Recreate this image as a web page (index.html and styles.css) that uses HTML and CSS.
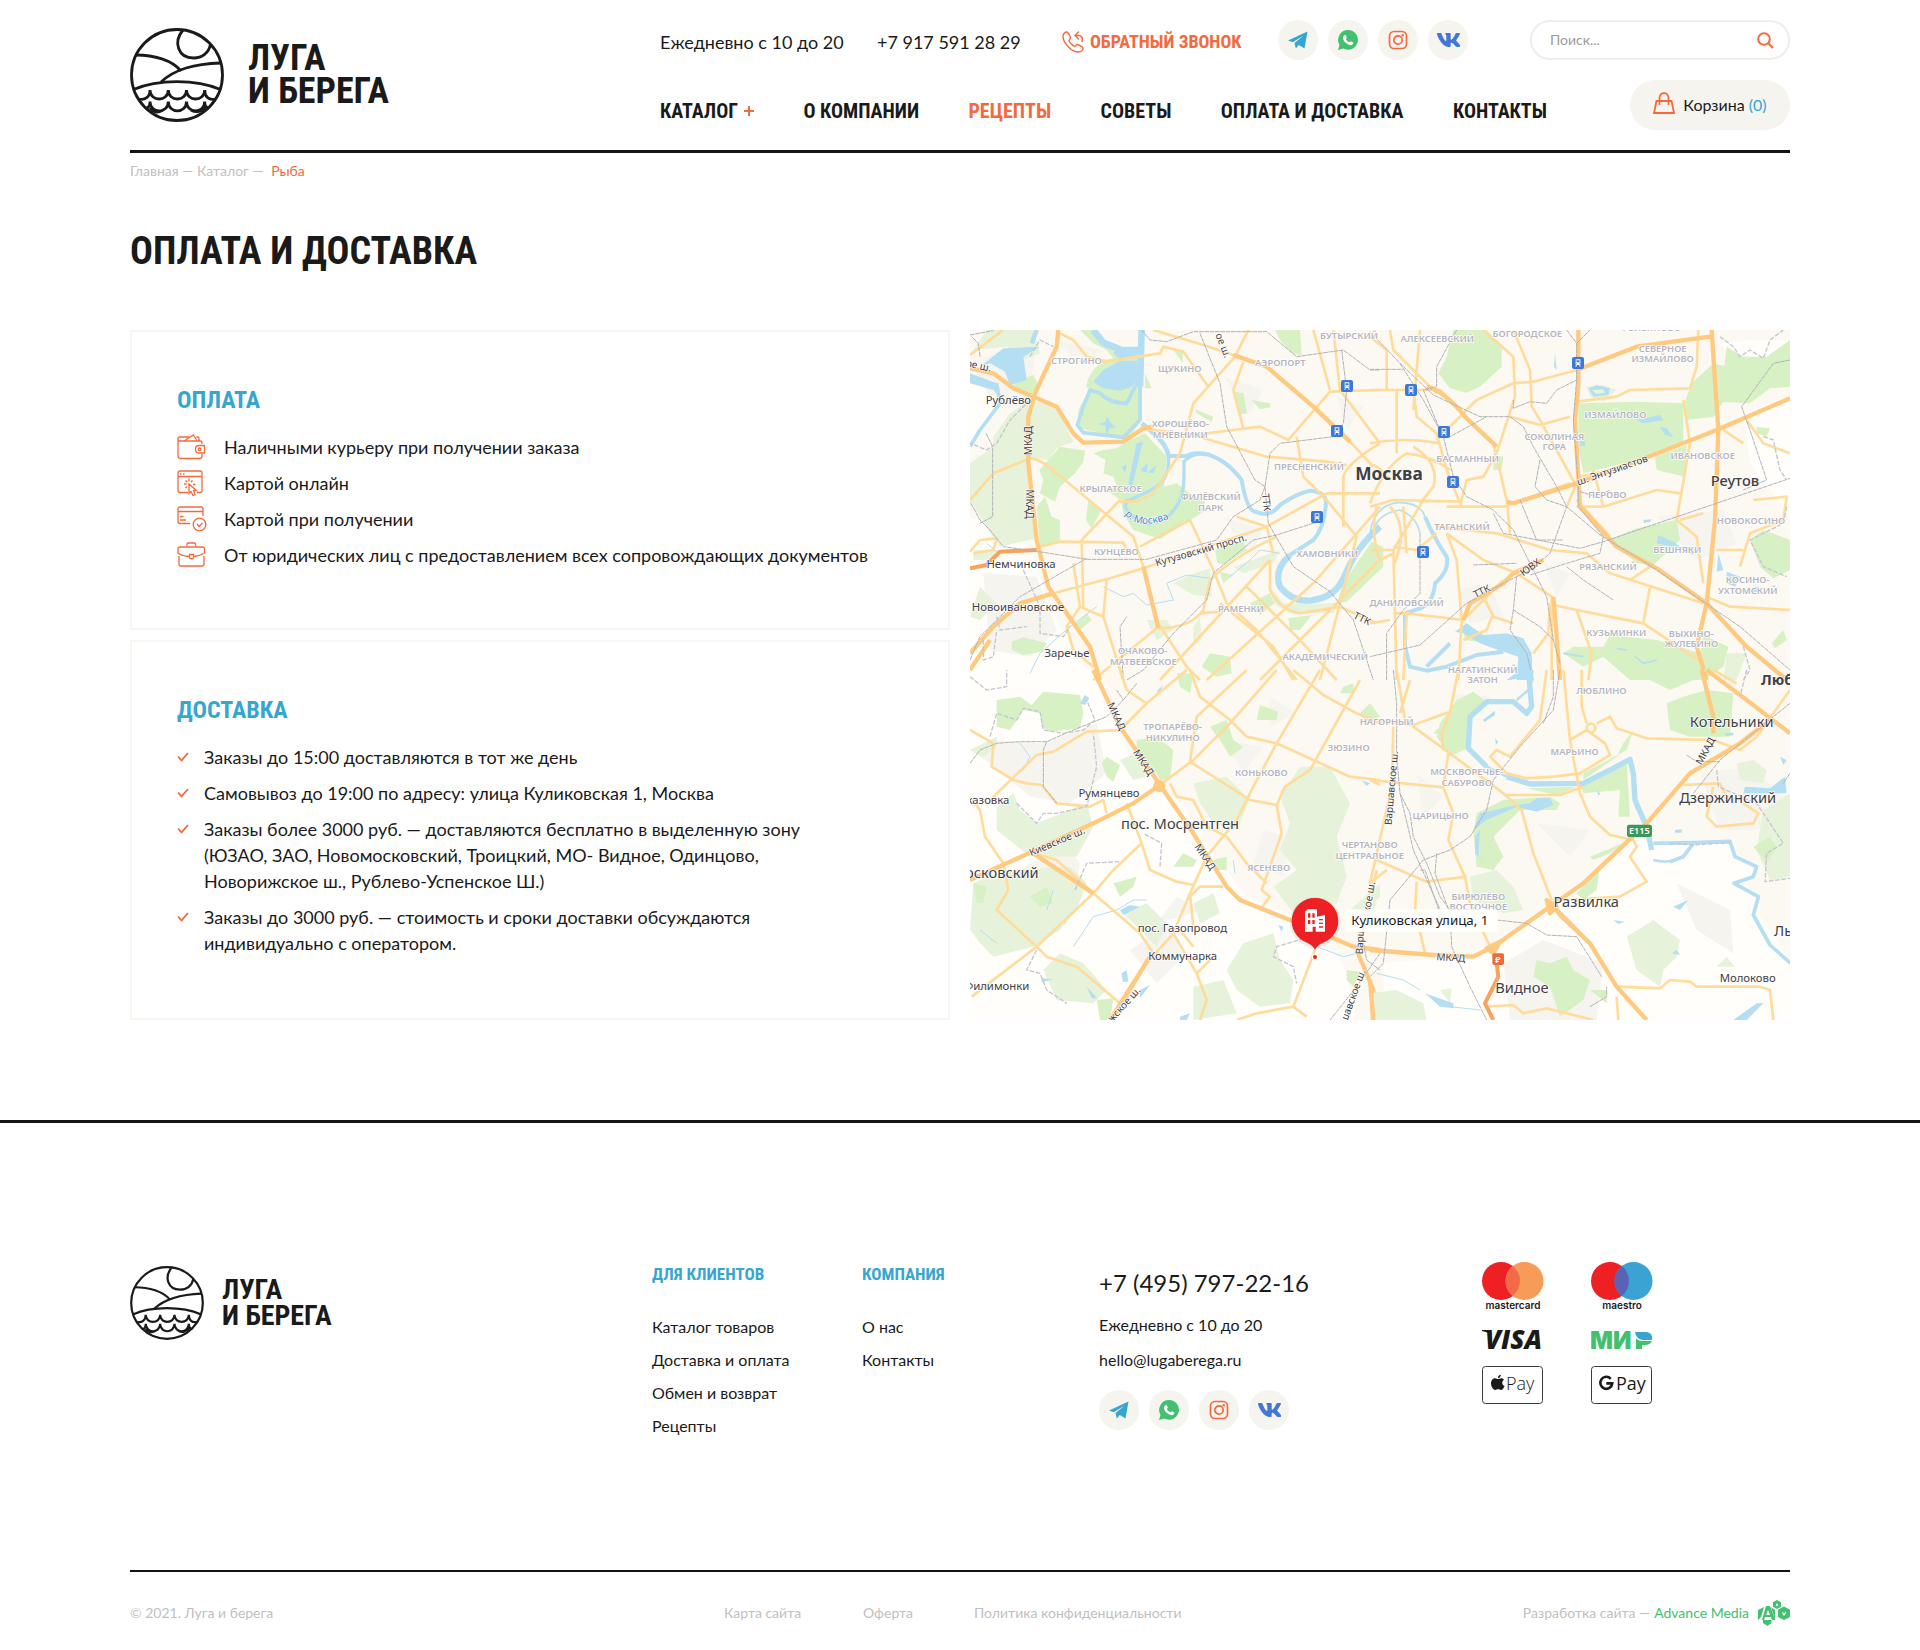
FILE: index.html
```html
<!DOCTYPE html>
<html lang="ru">
<head>
<meta charset="utf-8">
<meta name="viewport" content="width=device-width, initial-scale=1">
<title>Оплата и доставка — Луга и Берега</title>
<link rel="stylesheet" href="styles.css">
</head>
<body>
<svg class="sprite" aria-hidden="true">
  <symbol id="mark" viewBox="0 0 94 94">
    <g fill="none" stroke="currentColor" stroke-width="2.8">
      <circle cx="47" cy="47" r="45.5"/>
      <path d="M53 2C43 14 48 30 63.500 30C72 30 79 25 80.500 16"/>
      <path d="M6 27C24 27 42 32 51 43"/>
      <path d="M91 35C64 36 45 41 31 54"/>
      <path d="M3.500 61.500C28 51 66 51 90.500 61.500"/>
      <path d="M9 71C15 72.500 20 69 20 62C20 74 38.300 74 38.300 62C38.300 74 56.500 74 56.500 62C56.500 74 74.700 74 74.700 62C74.700 69 79 72.500 85 71"/>
      <path d="M16 80C19 80 20 78 20 73.500C20 86 38.300 86 38.300 73.500C38.300 86 56.500 86 56.500 73.500C56.500 86 74.700 86 74.700 73.500C74.700 78 76 80 79 80M20 80C24 86 30 84 33 82M61 82C66 85 72 84 75 79"/>
    </g>
  </symbol>
  <symbol id="telegram" viewBox="0 0 20 20"><path fill="#36a6cf" d="M0 10.500L19.500 1.500L16.500 18.500L10.800 15L7.800 18.500L6.500 13L15.500 5.500L4.800 12.300Z"/></symbol>
  <symbol id="whatsapp" viewBox="0 0 20 20"><path fill="#42bf6f" d="M10.100 0A9.900 9.900 0 1 1 5.300 18.600L0 20L1.500 14.900A9.900 9.900 0 0 1 10.100 0Z"/><path fill="#fff" d="M6.700 5C7.200 4.900 7.700 4.900 7.900 5.400L8.700 7.300C8.900 7.900 8 8.500 7.900 8.900C8.600 10.500 9.900 11.700 11.500 12.300C12 12.300 12.500 11.200 13 11.300L15 12.300C15.500 12.600 15.300 13.800 14.800 14.300C13.500 15.500 11.800 15.300 9.800 14.300C7.600 13.200 5.900 11.200 5.200 9.200C4.700 7.300 5.300 5.600 6.700 5Z"/></symbol>
  <symbol id="instagram" viewBox="0 0 20 20"><g fill="none" stroke="#f26a3d" stroke-width="1.700"><rect x="1.500" y="1.500" width="17" height="17" rx="4.500"/><circle cx="10" cy="10" r="4.200"/></g><circle cx="14.700" cy="5.300" r="1.200" fill="#f26a3d"/></symbol>
  <symbol id="vk" viewBox="18 96 530 320"><path fill="#4377d5" d="M545 117.700c3.700-12.500 0-21.700-17.800-21.700h-58.900c-15 0-21.900 7.900-25.600 16.700 0 0-30 73.100-72.400 120.500-13.700 13.700-20 18.100-27.500 18.100-3.700 0-9.400-4.400-9.400-16.900V117.700c0-15-4.200-21.700-16.600-21.700h-92.600c-9.400 0-15 7-15 13.500 0 14.200 21.200 17.500 23.400 57.500v86.800c0 19-3.400 22.500-10.900 22.500-20 0-68.600-73.400-97.400-157.400-5.800-16.300-11.500-22.900-26.600-22.900H38.800c-16.800 0-20.200 7.900-20.200 16.700 0 15.600 20 93.100 93.100 195.500C160.400 378.100 229 416 291.400 416c37.500 0 42.100-8.400 42.100-22.900 0-66.800-3.400-73.100 15.400-73.100 8.700 0 23.700 4.400 58.700 38.100 40 40 46.600 57.900 69 57.900h58.900c16.800 0 25.300-8.400 20.400-25-11.200-34.900-86.900-106.700-90.300-111.500-8.700-11.200-6.200-16.200 0-26.200.1-.1 72-101.300 79.400-135.600z"/></symbol>
  <symbol id="check" viewBox="0 0 12 10"><path fill="none" stroke="#f26a3d" stroke-width="1.800" d="M1 4.500L4.500 8.300L11 1"/></symbol>
  <symbol id="train" viewBox="0 0 36 36"><rect width="36" height="36" rx="6" fill="#3b78d8"/><path fill="#fff" fill-rule="evenodd" d="M11 7H25V24H11ZM13.500 10V16H22.500V10ZM13 19V21.500H15.500V19ZM20.500 19V21.500H23V19ZM12 25H15L13 29H9.500ZM21 25H24L26.500 29H23Z"/></symbol>
</svg>

<header class="wrap">
  <div class="header">
    <a class="logo" href="#">
      <svg class="logo-mark" aria-hidden="true"><use href="#mark"/></svg>
      <span>ЛУГА<br>И БЕРЕГА</span>
    </a>
    <div class="header-main">
      <div class="header-top">
        <span class="info">Ежедневно с 10 до 20</span>
        <a class="info" href="tel:+79175912829">+7 917 591 28 29</a>
        <button class="callback info" type="button">
          <svg viewBox="0 0 22 22" width="22" height="22" aria-hidden="true"><g fill="none" stroke="currentColor" stroke-width="1.400" stroke-linecap="round"><path d="M8.500 6.500C7.500 4 6 1 4.500 1C2.500 1 1 3.500 1 5.500C1 9 4.500 14 7 16.500C9 18.500 13 21 16.500 21C19 21 21 19.500 21 17.500C21 16 18 14.500 15.500 13.500C14.500 13 14 15 13 15.300C11.500 15.700 7.300 11.500 7 9.700C7 8.500 8.800 8 8.500 6.500Z"/><path d="M16.500 1L13 4.500L16.500 8M13.500 4.500H16.500C20 4.500 21 7 20 10.500"/></g></svg>
          ОБРАТНЫЙ ЗВОНОК
        </button>
        <div class="socials">
          <a href="#" aria-label="Telegram"><svg width="20" height="20"><use href="#telegram"/></svg></a>
          <a href="#" aria-label="WhatsApp"><svg width="20" height="20"><use href="#whatsapp"/></svg></a>
          <a href="#" aria-label="Instagram"><svg width="20" height="20"><use href="#instagram"/></svg></a>
          <a href="#" aria-label="ВКонтакте"><svg width="23" height="14"><use href="#vk"/></svg></a>
        </div>
        <form class="search">
          <input type="search" placeholder="Поиск..." aria-label="Поиск">
          <button type="submit" aria-label="Найти"><svg viewBox="0 0 17 17" width="17" height="17"><g fill="none" stroke="#f26a3d" stroke-width="2"><circle cx="7" cy="7" r="5.800"/><path d="M11 11L16 16"/></g></svg></button>
        </form>
      </div>
      <div class="header-bottom">
        <nav class="nav" aria-label="Основное меню">
          <a href="#">КАТАЛОГ<svg class="plus" viewBox="0 0 10 10" width="10" height="10" aria-hidden="true"><path d="M5 0V10M0 5H10" stroke="#f26a3d" stroke-width="2"/></svg></a>
          <a href="#">О КОМПАНИИ</a>
          <a class="active" href="#">РЕЦЕПТЫ</a>
          <a href="#">СОВЕТЫ</a>
          <a href="#">ОПЛАТА И ДОСТАВКА</a>
          <a href="#">КОНТАКТЫ</a>
        </nav>
        <a class="cart" href="#">
          <svg viewBox="0 0 22 22" width="22" height="22" aria-hidden="true"><g fill="none" stroke="#f26a3d" stroke-width="1.800"><path d="M3.500 9H18.500L21 21H1Z"/><path d="M6.500 13V6C6.500-.5 15.500-.5 15.500 6V13"/></g></svg>
          <span>Корзина <b>(0)</b></span>
        </a>
      </div>
    </div>
  </div>
</header>

<main class="wrap">
  <nav class="crumbs" aria-label="Хлебные крошки"><a href="#">Главная</a> — <a href="#">Каталог</a> — <span>Рыба</span></nav>
  <h1>ОПЛАТА И ДОСТАВКА</h1>
  <div class="content">
    <div class="cards">
      <section class="card">
        <h2>ОПЛАТА</h2>
        <ul class="pay-list">
          <li><svg viewBox="0 0 30 26" width="30" height="26" aria-hidden="true"><g fill="none" stroke="#f26a3d" stroke-width="1.300"><path d="M25 10V8.500Q25 7 23.500 7H3Q1 7 1 5Q1 3 3 3H12M1 5V22Q1 24.500 3.500 24.500H22.500Q25 24.500 25 22V20M22 7V4Q22 3 20.500 3H19.500"/><path d="M7 7L16.500 1L20 7"/><path d="M27.500 11.500H22Q18.500 11.500 18.500 15Q18.500 19 22 19H27.500Z"/><circle cx="22.500" cy="15.300" r="1.300"/></g></svg>Наличными курьеру при получении заказа</li>
          <li><svg viewBox="0 0 30 26" width="30" height="26" aria-hidden="true"><g fill="none" stroke="#f26a3d" stroke-width="1.300"><path d="M11 22.500H3Q1 22.500 1 20.500V3Q1 1 3 1H23Q25 1 25 3V20.500Q25 22.500 23 22.500H20M1 6.500H25"/><path d="M12 14V23.500L14 21.500L16 25.500L18 24.500L16.500 20.500H19.500Z"/><path d="M12 8.500V11.500M7 14H9.500M8.500 10.500L10.300 12.200M15.500 10.500L14 12.200M16 14.500H18.500M8.500 18L10 16.500"/><path stroke-dasharray="1.500 1.500" d="M3 4H9"/></g></svg>Картой онлайн</li>
          <li><svg viewBox="0 0 30 26" width="30" height="26" aria-hidden="true"><g fill="none" stroke="#f26a3d" stroke-width="1.300"><path d="M26 10V3Q26 1 24 1H3Q1 1 1 3V15.500Q1 17.500 3 17.500H13M1 5.500H26M3 10.500H6.500M3 14H9"/><circle cx="22.500" cy="18.500" r="6.300"/><path d="M20 18L22 20.500L25.500 17"/></g></svg>Картой при получении</li>
          <li><svg viewBox="0 0 30 26" width="30" height="26" aria-hidden="true"><g fill="none" stroke="#f26a3d" stroke-width="1.300"><path d="M10 4V2Q10 1 11 1H17.500Q18.500 1 18.500 2V4"/><path d="M12.500 14.500Q5 14 1 11V7Q1 5 3 5H25.500Q27.500 5 27.500 7V11Q23 14 16.500 14.500M2 14V22Q2 24 4 24H25Q27 24 27 22V14"/><path d="M12.500 12.500H16.500V16Q14.500 17.500 12.500 16Z"/></g></svg>От юридических лиц с предоставлением всех сопровождающих документов</li>
        </ul>
      </section>
      <section class="card">
        <h2>ДОСТАВКА</h2>
        <ul class="ship-list">
          <li><svg width="12" height="10" aria-hidden="true"><use href="#check"/></svg><span>Заказы до 15:00 доставляются в тот же день</span></li>
          <li><svg width="12" height="10" aria-hidden="true"><use href="#check"/></svg><span>Самовывоз до 19:00 по адресу: улица Куликовская 1, Москва</span></li>
          <li><svg width="12" height="10" aria-hidden="true"><use href="#check"/></svg><span>Заказы более 3000 руб. — доставляются бесплатно в выделенную зону<br>(ЮЗАО, ЗАО, Новомосковский, Троицкий, МО- Видное, Одинцово,<br>Новорижское ш., Рублево-Успенское Ш.)</span></li>
          <li><svg width="12" height="10" aria-hidden="true"><use href="#check"/></svg><span>Заказы до 3000 руб. — стоимость и сроки доставки обсуждаются<br>индивидуально с оператором.</span></li>
        </ul>
      </section>
    </div>

    <svg class="map" viewBox="0 0 2460 2070" preserveAspectRatio="xMidYMid slice" role="img" aria-label="Карта: Куликовская улица, 1">
      <rect width="2460" height="2070" fill="#fcf9f2"/>

      <!-- countryside outside the ring road -->
      <g class="rural">
        <path d="M0 150L80 190L85 240L0 340ZM0 560L180 650L240 830L330 1000L410 1060L440 1200L520 1340L640 1420L720 1560L830 1700L980 1760L1120 1900L1160 2070H0Z"/>
        <path d="M1240 1900L1560 1870L1760 1720L1990 1520L2050 1540H2280L2300 1590L2360 1620L2300 1670L2370 1710L2370 1760L2460 1890V2070H1240Z"/>
        <path d="M2250 40L2340 30L2460 30V90L2320 130ZM2320 250L2460 200V560L2340 400Z"/>
      </g>
      <g class="suburb">
        <path d="M0 100L100 60L200 30L180 180L60 200ZM40 730L200 740L260 900L180 980L60 960ZM0 1260L60 1230L220 1240L380 1180L410 1330L300 1420L180 1400L60 1300ZM100 1650L280 1540L330 1600L300 1760L170 1800L80 1740ZM880 1500L960 1520L940 1640L850 1600ZM480 1860L600 1780L640 1880L560 1960ZM2190 1330L2340 1310L2440 1400L2400 1500L2250 1500ZM2060 560L2260 540L2300 640L2180 690ZM1600 1900L1720 1830L1900 1900L1880 2070H1620ZM2120 1660L2280 1740L2290 1870L2180 1800Z"/>
        <path d="M250 30L400 60L340 110ZM760 140L880 180L840 250ZM760 560L880 600L840 680ZM1460 780L1560 760L1600 860L1500 880ZM1720 700L1800 730L1760 800ZM1900 320L1960 380L1900 430ZM1430 1090L1560 1100L1540 1160ZM1700 1480L1860 1500L1800 1580ZM1340 1330L1420 1400L1360 1460ZM560 1780L620 1700L700 1740ZM760 1230L880 1250L820 1330ZM900 1100L980 1150L900 1190ZM1100 200L1180 230L1130 300Z"/>
      </g>

      <!-- north-west -->
      <g transform="translate(-30 -30)">
        <g class="grove">
          <path d="M30 430L100 380L100 350L150 280L210 240L290 260L340 365L290 385L265 420L210 415L205 500L230 655L120 680L90 640L30 540ZM40 690L120 690L100 720L40 720ZM640 790L690 765L750 745L755 830L700 825L660 800ZM930 800L970 850L1140 850L1120 880L990 880L940 850ZM60 800L110 850L60 900L30 890ZM40 90L80 30H220L240 100L190 120L140 80Z"/>
          <path d="M560 900L620 900L640 930L590 960ZM700 920L720 890L725 960L700 980ZM820 740L960 690L940 730L850 760Z"/>
        </g>
        <g class="park">
          <path d="M360 30L410 30L440 75L480 95L530 90L545 110V300L520 335L500 355L355 325L355 270L390 205L378 200L385 175L400 150L430 120L460 115L440 90L400 70Z"/>
          <path d="M430 390L470 385L500 365L555 340L620 410L612 500L650 490L690 520L735 545L730 575L600 657L520 630L490 580L482 540L440 512L470 495L460 470L430 460L437 420L400 400Z"/>
          <path d="M265 420L300 380L375 392L370 425L345 460L300 500L285 545L240 520L250 480L238 450ZM230 560L255 530L275 590L300 600L300 660L240 680ZM385 540L425 570L395 625L378 600ZM945 30H1020L1025 105L995 100L960 60ZM825 215L850 220L862 280L835 285ZM875 240L930 250L932 262L900 268ZM705 268L760 290L755 305L710 280ZM765 690L850 665L860 690L790 735L772 728ZM1150 790L1235 665L1270 680V740L1160 845L1130 850ZM870 850L930 820L942 850L900 885ZM985 895L1055 885L1020 930L990 930ZM155 965L190 952L262 970L245 995L190 1005L155 990ZM160 190L220 165L235 195L215 225L170 210ZM780 755L820 765L790 790ZM340 920L380 880L395 900L360 930ZM555 160L575 205L555 205ZM640 90L670 90L668 130ZM750 1000L810 1010L815 1060L770 1070L725 1040Z"/>
        </g>
        <g class="lake">
          <path d="M400 185L430 150L480 122L530 122L535 172L515 200L480 212L430 205ZM60 140L130 85L240 80L190 110L200 180L150 195L135 155L90 130ZM30 160L110 190L120 230L100 210L30 190ZM460 100L480 80L535 80L530 115L480 118ZM440 290L455 312L468 322L450 325L440 345L436 318L415 312L436 306ZM530 370L548 365L512 520L500 515ZM540 450L562 430L560 460L590 435L580 460L550 455ZM485 440L500 435L495 460Z"/>
        </g>
        <g class="river">
          <path stroke-width="20" d="M400 30L430 68L480 88M545 30L540 200"/>
          <path stroke-width="11" d="M540 200V300L490 352L370 338L352 315L368 265L390 210L420 220Q450 250 500 250L535 180M30 380L60 330L120 250L110 190"/>
          <path stroke-width="14" d="M545 310Q625 370 625 410M230 30L215 70"/>
          <path stroke-width="10" d="M625 410Q630 470 590 500Q540 530 500 542L495 560Q520 600 560 610Q620 605 645 565Q672 530 672 470V425Q700 395 740 405"/>
          <path stroke-width="12" d="M625 408H680Q700 395 740 402Q800 420 845 480Q860 570 885 575Q930 595 960 555Q1010 520 1050 512Q1095 515 1098 545Q1095 620 1060 660L990 705"/>
          <path stroke-width="19" d="M990 705Q940 750 960 800Q1000 850 1060 840Q1130 830 1155 765Q1190 680 1260 620"/>
          <path stroke-width="3" d="M430 800L490 830L520 820L560 855L640 840L620 790L680 765L750 775M810 770L870 720L900 690L960 700M80 670L110 695M210 1060L240 1000L330 920L410 860"/>
        </g>
        <g class="road">
          <path d="M30 105L130 30M300 40L340 60L380 110L440 125L600 100L610 80L670 95L745 200M580 30L730 75L820 105L920 140L1060 260L1170 365L1240 440M865 30L825 110L700 250L660 400L580 520L530 545L480 545M850 125L820 210L850 325M540 325L700 345L900 320L985 360L1110 215L1260 210M700 345L920 410L1100 425L1160 435M830 590L920 620L940 700M30 540L100 460L210 415Q240 415 290 460L520 650L550 740M365 660L480 540M240 680L300 665L490 668L500 690M30 695L60 660L110 655L100 690L40 700M280 820L450 775L550 745L920 620L1100 520L1260 520M550 740L595 910L680 1040L720 1080M595 925Q690 925 730 870L750 780Q820 710 950 650M400 1080L590 925M690 600L760 750L800 850L890 930L1010 1080M690 600L540 680M340 730L360 860L430 890L490 1080M365 660L370 860M440 780L430 890M360 860L320 920L340 990L400 1040M600 1080L930 720M740 1080L1060 790L1260 560M900 1080L1260 720M860 800L1010 950L1130 1080M930 720V810Q960 870 1020 880L1140 860L1250 910M780 850L940 980L1000 1080M1060 30L1110 210M1120 30L1140 210L1260 370M1010 350L1030 470L1100 540L1190 650L1140 850L1080 1080M1150 620V470Q1160 430 1260 370M720 880L780 875"/>
        </g>
        <g class="avenue">
          <path d="M295 30L290 80L225 220L205 290V430L230 660L265 800L390 980L420 1080M30 145L100 160L160 205L220 230L290 260L340 340L370 368L490 365L550 325L580 320M820 105L920 140L1060 260L1170 365M550 740L595 925M30 1000L100 920L180 850L280 820M30 1050L90 960"/>
        </g>
        <path class="motorway" d="M30 745L80 735L120 695L230 690"/>
        <path class="rail" d="M30 45L100 32M60 110L55 70L35 50M545 30L570 60L620 65L700 35H920L1010 110L1150 90L1230 150H1260M1145 90L1160 210L1150 310L1120 350L960 370L930 400L915 500L900 540L820 590L770 660L560 718L380 718L270 700L130 680L90 630L60 600L30 545M78 340L98 380V590L60 610M720 40L780 190L800 320L885 480L915 500L925 610L1000 740L1110 815L1180 900L1240 1080M30 1020L60 950L180 830L380 715M1090 600L950 645L880 660L760 760L740 840L640 940L550 1050L500 1080M490 1080L480 920L500 890"/>
        <path class="border" d="M210 110L240 60L280 80M210 240L150 300L110 370L80 390L30 370M190 750L240 860V940L310 950L330 920M110 890L120 930L200 920M70 960V1020L100 1010L110 930"/>
      </g>

      <!-- north-east -->
      <g transform="translate(1200 -30)">
        <g class="park">
          <path d="M250 30H350L395 80V140L330 200L290 218L240 205L205 160L230 110Z"/>
          <path d="M625 250L800 245L940 250V370L880 400L640 460L625 380ZM855 410L950 375L945 470L860 450ZM945 245L965 190L1030 130L1070 140L1060 245L1030 290L950 300ZM1070 80L1120 110L1190 110L1260 60V200L1200 205L1140 250L1050 245ZM715 660L800 625L920 600L930 660L850 735L800 730ZM1140 660L1180 630L1260 660V750L1210 775L1170 740ZM610 980L700 980L720 945L860 960L990 1000L1000 945L1075 980L1060 1040L1000 1080H780L700 1010L640 1040L580 1000ZM1205 970L1240 930L1250 960L1215 985ZM1160 320L1200 325L1190 350L1160 340ZM370 405L400 410L395 450L370 450ZM0 690L10 680V730H0ZM280 930L330 945L320 965L285 960Z"/>
          <path class="pale" d="M650 200L700 195L740 210L700 245L660 230ZM1070 1000L1130 1000L1100 1080H1060Z"/>
        </g>
        <g class="lake">
          <path d="M655 205L680 196L720 205L715 225L670 230ZM665 210L680 222L705 218L700 208ZM870 320L890 325L910 352L885 345ZM865 645L910 665L930 680H970V705L930 685L860 670ZM820 600L845 598L840 606L822 608ZM1045 700L1060 750L1040 755ZM1070 755L1110 770L1095 800L1070 790ZM1150 800L1165 800L1160 820L1148 815ZM630 362H645V378H630ZM555 100L560 150L552 140ZM800 300L870 285L880 300L820 310Z"/>
          <path d="M255 935L290 910L340 945L410 940L460 955L485 1000L488 1080L440 1080L445 1010L370 985L330 970L280 940Z"/>
        </g>
        <g class="river">
          <path stroke-width="5" d="M0 640Q10 560 80 548Q150 545 165 590M15 620Q30 580 90 570Q140 590 150 640M640 1010L580 1000M740 985L770 990M795 1010L820 1030L860 1020"/>
          <path stroke-width="12" d="M165 590Q190 650 230 710Q240 750 195 790Q190 850 150 865L105 880V980L120 1040L170 1052L230 1040L320 1005L400 995M170 1040L240 970"/>
        </g>
        <g class="road">
          <path d="M0 50L50 90V210M60 30L70 90L200 220M0 210H210L290 295L370 370L410 540L420 640M150 30L130 270M130 210L140 290L200 340L230 450L270 550M340 30L430 110L435 230L380 400M430 30L480 150L485 260L510 300L620 500M200 360L320 240L430 190L490 185L620 150M600 290L510 315L420 290M620 245L740 230L780 210L960 205L980 140L985 30M620 490L590 560M0 370Q100 350 210 370M80 210V400M60 480Q10 420 0 440M0 560L70 540L270 545M130 380Q210 430 190 500L150 550M0 550Q40 440 110 400Q190 410 240 450M270 560L290 480L340 470L380 400M230 560H400L600 490M160 540L70 690L0 690M70 690L80 1080M70 880H110L280 900L400 780M110 880L100 1080M230 640L260 720L275 900L265 1080M200 620L380 640L540 690M70 680L140 690L200 640M230 640L340 720L440 760L545 830V1080M540 690L650 700L720 760L1000 850M720 650L620 540M620 560L700 560L860 510L930 520M940 240L960 370L920 600L980 650L1000 790M1010 830L1080 860L1260 870M930 600L1000 580M1040 690L1120 690M1150 540L1250 530L1240 600L1140 640L1110 740M1130 300L1180 370L1260 400M1060 330L1120 370M550 855L620 870L820 910L1000 1030M840 800L820 910M540 850L535 940L490 1000M620 870L665 1000L655 1080M340 830L370 890L430 910M20 560Q0 640 30 720L70 700M60 560Q120 620 70 740M100 560L110 700"/>
          <path d="M840 740L780 780M630 470L720 450M670 450L700 560M370 880L350 930L280 960M0 910L60 900"/>
        </g>
        <g class="avenue">
          <path d="M430 550L620 490L850 405L1040 330L1260 235M1025 30L1045 330L1035 600L1010 850L980 980L1010 1080M625 30V200L615 300L630 560L740 680L860 745L1010 850L1130 980L1250 1080M620 150L800 80L1020 50M430 550L410 545M280 900L300 850L400 790L430 760L520 720M550 830L560 950L570 1080M170 200Q220 210 290 295L380 380"/>
        </g>
        <path class="rail" d="M0 35L90 130L190 225L330 290H420L460 320L490 380L560 500L590 560L690 645L830 730L1110 920L1260 1050M90 130L160 240L220 350L250 470L290 530L370 570L430 630L530 830L550 960L570 1030M260 30L200 140V200L160 210L210 330L240 350L350 290M590 30L620 70L660 30M620 70V180L610 300L625 500V560L700 650L690 700L590 730L480 765M430 240V265L480 245L530 250L560 210L620 180M510 420L495 500L530 540L590 560L540 700L480 750L400 790L290 850L150 975L0 1010M370 580L400 640L630 685L700 665L1260 475M450 540L500 660L580 660M590 740L640 780L730 840M310 735L440 730M440 770L430 870L510 920L550 960M430 870L420 930L470 1000L490 1080M50 1080V940L100 870L150 820V640M1260 120L1210 130L1115 260L1150 360L1190 480L1120 510M0 148H100M630 515L680 530L720 510"/>
        <path class="border" d="M1050 50L1090 80L1110 110L1140 90L1180 115L1200 60L1240 30M1180 350L1210 360L1230 450L1250 480M1250 560L1240 610L1140 660L1180 740L1250 770M1120 980L1140 1050L1120 1080"/>
      </g>

      <!-- south-west -->
      <g transform="translate(-30 1020)">
        <g class="grove">
          <path d="M110 410L160 370L180 420L230 460L380 400L400 470L350 560L210 560L160 520L110 480ZM40 640L130 600L330 590L380 640L350 720L300 780L220 830L100 860L60 820L30 780ZM700 340L800 320L870 390L830 480L760 460L720 400ZM960 380L1020 290L1110 290L1170 400L1130 500L1160 620L1130 700L1000 730L940 650L1010 600L960 540L990 460ZM800 900L850 820L940 790L960 870L1000 930L990 1000L900 1010L830 960ZM700 700L760 670L780 730L720 760ZM490 730L560 700L620 760L590 830L540 780ZM250 900L300 850L370 880L440 960L400 1000L290 990ZM480 270L570 230L590 310L520 330ZM700 950L790 930L830 1030L700 1050ZM30 240L110 200L110 230L70 260ZM1170 720L1260 640V680L1200 740Z"/>
        </g>
        <g class="park">
          <path d="M110 90L180 80L215 105L250 65L360 75L370 130L360 175L270 185L245 170L240 130L190 120L150 180L110 170ZM530 210L590 200L640 240L630 330L600 330L580 290L530 260ZM425 280L440 260L480 285L460 335L440 320ZM640 590L670 550L710 570L700 590ZM750 170L800 150L820 210L850 230L810 260L780 210ZM900 105L955 125L950 150L890 150ZM650 10L700 10L690 70L660 50ZM460 640L530 620L520 650L480 680ZM210 680L260 650L280 700L240 710ZM410 990L460 985L450 1050H420ZM1150 50L1180 40L1180 70H1140ZM755 570L800 560V600L765 600ZM1160 900L1200 905L1180 950L1160 930ZM40 640L80 650L70 700L50 700ZM1200 130L1230 100L1260 140L1220 160Z"/>
        </g>
        <g class="lake">
          <path d="M360 100L375 75L388 85L375 105ZM485 910L500 900L505 935L488 935ZM540 960L570 945L540 985ZM380 950L412 985H395ZM245 925L280 928L245 937ZM480 720L510 705L540 710L490 735ZM1205 330L1230 340L1220 348ZM955 765L970 770L965 785ZM590 65L608 45L600 70ZM660 1040L690 1030L680 1050H660Z"/>
        </g>
        <g class="river"><path stroke-width="3" d="M180 220L210 260L190 300M340 830L400 740L470 720L520 690L560 690M1070 830L1150 860L1190 850M820 570L825 610M280 660L260 720M60 780L110 820"/></g>
        <g class="road">
          <path d="M30 180L100 220L95 290L160 330L200 340L245 345L290 400L390 410L430 390L440 430M90 390L230 255L280 245L380 185L480 180L560 100L680 0M480 0L500 60L560 100M30 380L60 420L75 500L130 580L145 660L110 720L230 830L260 860L350 890L480 1000M220 550L290 570L400 670L540 790L580 850M35 980L230 830L400 670L460 600L545 520L570 600L650 635L700 645M545 520L500 400M690 0L720 80L810 150L860 200L950 220L1060 270L1170 320L1260 330M600 345L700 270L810 160L950 0M690 275L710 140L860 0M690 275L870 390L950 405L975 350L1050 300L1200 30M1000 0L1090 75L1190 130L1260 160M1080 0L950 220L880 350L830 450L740 560L690 670L640 790L560 880L460 1050M950 405L965 490L905 660L930 680L900 720M630 340L650 380L700 390L740 470L800 500L860 580L920 640M690 670L700 770M690 680L720 650L790 650M640 790L710 910L740 990L720 1050M710 910L760 860M1065 840L1000 1010L890 1030L830 1050M1000 1010L1040 1040M1250 600L1200 830M660 780L700 830"/>
        </g>
        <g class="avenue"><path d="M400 0L480 170L600 345L700 490L800 650L840 690L990 750L1110 800L1180 830L1260 840M30 630L140 580L400 460L520 400L600 345M220 550L400 670M450 1050L570 860M1190 840L1240 960V1050"/><circle cx="598" cy="348" r="12"/></g>
        <path class="rail" d="M30 280L60 240L110 220L180 215L260 215L340 180L440 140L490 90L470 60M260 215L250 240V350L290 400M530 40L490 90M1260 850L1190 950L1110 1050M1210 820L1220 870L1260 900"/>
        <path class="border" d="M30 20L80 60L140 50V0M90 200L110 130L170 150L190 115L240 125L250 180L310 190L370 180L405 150L380 90M170 400L230 460L250 430L290 430L380 410L410 290L400 190M345 660L380 580L480 575M600 590L605 520L550 490M230 840L200 900L240 910L260 960L320 1000M1050 800L950 830L940 860L1000 890L1010 940"/>
      </g>

      <!-- south-east -->
      <g transform="translate(1200 1020)">
        <g class="grove">
          <path d="M770 800L850 750L930 810L920 860L880 900L870 950L800 900ZM1180 420L1260 370V620L1200 630L1160 540ZM0 970L80 960L160 1000L170 1050H0ZM1100 280L1150 270L1190 300L1180 340L1110 330ZM300 620L380 600L430 650L460 720L400 730L310 690ZM0 640V740L20 700ZM1040 890L1070 860L1095 890Z"/>
        </g>
        <g class="park">
          <path d="M210 160L260 90L310 65L350 95L300 140V230L240 260L200 200ZM740 0H1010L970 30L900 60L840 30ZM890 100L940 80L1010 60L1090 70L1080 200H960L900 180ZM320 430L400 390L540 380L570 400L560 420L450 420L400 470L370 500L400 560L370 600L320 590L310 490ZM640 310L770 240L790 180L820 140L760 220L740 260L640 330ZM630 340L770 280L780 440H745L750 360L640 370ZM660 560L770 515L720 550L670 570ZM500 870L540 880L590 860L610 900L660 930L640 990L570 1040L540 950L490 920ZM620 670L690 590L680 660L640 690ZM470 355L620 350L560 375ZM1150 530L1200 500L1220 530L1190 580ZM660 960L710 960V1000ZM190 190L260 120V200Z"/>
          <path class="pale" d="M210 960L245 955L240 1000Z"/>
        </g>
        <g class="lake">
          <path d="M330 430L440 405L480 400L500 385L540 385L550 405L500 425L440 410L350 450L310 480ZM315 500L330 480L325 560L350 580L315 550ZM1125 350L1200 355L1245 320L1250 370L1120 370ZM410 30L450 0H490V40L470 20L420 30ZM1090 1050L1160 1000L1180 1000L1130 1050ZM165 970L250 1000V1015L210 1010ZM910 710L955 690L930 720ZM730 750L765 755L745 762ZM905 850L920 840L930 855ZM338 150L375 122L375 135L345 155ZM375 205L385 215L378 225ZM1065 190L1090 188V196L1068 198ZM680 360L692 372L685 376ZM915 480L935 478V488H915ZM1230 260L1250 270L1240 285ZM795 400L820 465L790 400Z"/>
        </g>
        <g class="river">
          <path stroke-width="16" d="M475 0L485 110L470 130L430 95H350L300 140L295 235L350 290M410 320L480 342L640 340L720 300L780 268L790 310L795 390L830 470L845 540"/>
          <path stroke-width="7" d="M350 290L410 320M440 90L475 60M850 570Q910 585 950 550"/>
          <path stroke-width="11" d="M850 520L970 518L1080 514L1095 560L1160 590L1150 620L1092 640L1165 680L1150 735L1200 825L1262 880M970 520L940 560L900 575"/>
          <path stroke-width="3" d="M20 910L100 930L150 960M240 1010L330 1020"/>
        </g>
        <g class="road">
          <path d="M80 0L105 150L130 170L240 250L400 370L455 420L490 550L545 690M0 150L130 165L240 125L265 0M265 0L240 130L215 190L220 240M70 170L65 350L0 640L50 600M0 330L220 352L250 430L235 510L285 620L300 700L360 830M220 352L235 250M20 570L170 635L290 620M140 635L135 720L165 850M580 0L600 210L630 370L660 440L720 495L790 510L800 530L780 560L830 635L750 680L590 690M600 210L650 180L705 220L720 255L630 310L550 320L470 325L410 310L360 260L380 240L420 260L510 150L530 0M635 0V110L650 160M680 160L720 140L740 175L830 205L1030 210L1110 240L1160 200L1260 60M410 375H570L640 350M940 345L1050 340L1070 380L1100 400M1030 350L1010 440L1040 470L1150 460L1165 430L1120 400M745 950L870 955L900 930L960 935L980 950L1170 950L1200 960L1210 1050M350 1010L430 1005L460 1030L530 1015L670 1050M120 30L90 130M1030 0L1100 40M740 980L745 1050M0 330L30 345"/>
          <circle cx="663" cy="174" r="13"/>
        </g>
        <g class="avenue"><path d="M0 840L190 855L310 860L370 830L540 710L640 640L830 460L960 310L1110 220L1200 150M1010 0L1130 90L1260 190M995 0L1030 140V190M545 700L570 735L660 820L740 950L830 1050M560 720L640 800M0 930L10 1050"/><path fill="#ffc478" d="M530 690L560 710L540 730ZM350 835L390 815L370 850Z"/></g>
        <path class="motorway" d="M380 880L385 920L345 1000L370 1050"/>
        <path class="rail" d="M70 0L80 100V260L90 370L120 430L130 500L170 580L210 680L240 720L245 830L300 950L350 1050M570 0L550 120L450 230L370 330L350 420L300 500L240 540L160 570L60 690L40 880L0 920M550 0V80L520 160M90 370L130 540L220 740M150 600H165L210 730M200 550L195 610L240 730M380 750L470 760L530 795L620 800L695 920M1260 100L1210 140L1050 270L970 370M950 255L980 275H1050M1260 310L1240 340M660 1010L710 980V950"/>
        <path class="border" d="M1130 0L1110 80M1040 300L1045 350L1160 400L1240 520L1190 550L1185 635L1260 625M900 520L970 525L1080 518"/>
      </g>

      <g class="district">
        <text x="319" y="103">СТРОГИНО</text><text x="629" y="126">ЩУКИНО</text><text x="931" y="107">АЭРОПОРТ</text>
        <text x="1137" y="26">БУТЫРСКИЙ</text><text x="1402" y="35">АЛЕКСЕЕВСКИЙ</text><text x="1672" y="21">БОГОРОДСКОЕ</text>
        <text x="2045" y="3">ГОЛЬЯНОВО</text>
        <text x="2078" y="65">СЕВЕРНОЕ</text><text x="2078" y="97">ИЗМАЙЛОВО</text><text x="1936" y="263">ИЗМАЙЛОВО</text>
        <text x="631" y="291">ХОРОШЁВО-</text><text x="631" y="323">МНЁВНИКИ</text><text x="1753" y="329">СОКОЛИНАЯ</text><text x="1753" y="361">ГОРА</text>
        <text x="1017" y="420">ПРЕСНЕНСКИЙ</text><text x="1493" y="395">БАСМАННЫЙ</text><text x="2198" y="387">ИВАНОВСКОЕ</text>
        <text x="422" y="486">КРЫЛАТСКОЕ</text><text x="722" y="509">ФИЛЁВСКИЙ</text><text x="722" y="542">ПАРК</text><text x="1912" y="505">ПЕРОВО</text>
        <text x="2343" y="582">НОВОКОСИНО</text><text x="1476" y="601">ТАГАНСКИЙ</text><text x="439" y="674">КУНЦЕВО</text><text x="1072" y="682">ХАМОВНИКИ</text>
        <text x="2122" y="669">ВЕШНЯКИ</text><text x="1914" y="720">РЯЗАНСКИЙ</text><text x="2333" y="760">КОСИНО-</text><text x="2333" y="792">УХТОМСКИЙ</text>
        <text x="813" y="846">РАМЕНКИ</text><text x="1310" y="827">ДАНИЛОВСКИЙ</text><text x="1939" y="918">КУЗЬМИНКИ</text><text x="2164" y="920">ВЫХИНО-</text><text x="2164" y="952">ЖУЛЕБИНО</text>
        <text x="518" y="972">ОЧАКОВО-</text><text x="520" y="1004">МАТВЕЕВСКОЕ</text><text x="1066" y="991">АКАДЕМИЧЕСКИЙ</text><text x="1538" y="1028">НАГАТИНСКИЙ</text><text x="1538" y="1060">ЗАТОН</text>
        <text x="1894" y="1092">ЛЮБЛИНО</text><text x="1250" y="1184">НАГОРНЫЙ</text><text x="608" y="1201">ТРОПАРЁВО-</text><text x="608" y="1233">НИКУЛИНО</text><text x="1136" y="1263">ЗЮЗИНО</text>
        <text x="1814" y="1274">МАРЬИНО</text><text x="1490" y="1335">МОСКВОРЕЧЬЕ-</text><text x="1490" y="1367">САБУРОВО</text><text x="874" y="1338">КОНЬКОВО</text><text x="1412" y="1467">ЦАРИЦЫНО</text>
        <text x="1199" y="1555">ЧЕРТАНОВО</text><text x="1199" y="1587">ЦЕНТРАЛЬНОЕ</text><text x="896" y="1623">ЯСЕНЕВО</text><text x="1525" y="1709">БИРЮЛЁВО</text><text x="1525" y="1741">ВОСТОЧНОЕ</text>
      </g>
      <g class="street">
        <text transform="translate(24 117) rotate(12)">ое ш.</text>
        <text transform="translate(750 50) rotate(68)">ое ш.</text>
        <text transform="translate(187 332) rotate(-90)">МКАД</text>
        <text transform="translate(169 522) rotate(90)">МКАД</text>
        <text transform="translate(879 518) rotate(84)">ТТК</text>
        <text transform="translate(696 670) rotate(-16)">Кутузовский просп.</text>
        <text transform="translate(1930 430) rotate(-19)">ш. Энтузиастов</text>
        <text transform="translate(1687 720) rotate(-36)">ЮВХ</text>
        <text transform="translate(1540 793) rotate(-26)">ТТК</text>
        <text transform="translate(1172 875) rotate(26)">ТТК</text>
        <text transform="translate(430 1163) rotate(65)">МКАД</text>
        <text transform="translate(512 1303) rotate(57)">МКАД</text>
        <text transform="translate(697 1586) rotate(56)">МКАД</text>
        <text transform="translate(265 1544) rotate(-23)">Киевское ш.</text>
        <text transform="translate(1274 1375) rotate(-85)">Варшавское ш.</text>
        <text transform="translate(1206 1710) rotate(-80)">ское ш.</text>
        <text transform="translate(1180 1833) rotate(-88)">Варш</text>
        <text transform="translate(1158 2002) rotate(-70)">шавское ш.</text>
        <text transform="translate(470 2030) rotate(-48)">жское ш.</text>
        <text transform="translate(2215 1268) rotate(-62)">МКАД</text>
        <text transform="translate(1442 1893) rotate(3)">МКАД</text>
        <path id="moskva-river" d="M458 540Q490 610 610 562" fill="none"/>
        <text class="stream"><textPath href="#moskva-river" startOffset="50%">р. Москва</textPath></text>
      </g>
      <g class="town">
        <text x="115" y="222">Рублёво</text><text x="153" y="713">Немчиновка</text><text x="144" y="843">Новоивановское</text><text x="291" y="981">Заречье</text>
        <text x="417" y="1400">Румянцево</text><text x="637" y="1807">пос. Газопровод</text><text x="638" y="1889">Коммунарка</text><text x="2333" y="1955">Молоково</text>
        <text class="end" x="118" y="1421">Бачказовка</text><text class="end" x="178" y="1980">Филимонки</text>
      </g>
      <g class="city">
        <text x="1257" y="450" class="capital">Москва</text><text x="2295" y="467" class="strong">Реутов</text><text x="2285" y="1191">Котельники</text><text x="2273" y="1420">Дзержинский</text>
        <text x="630" y="1496">пос. Мосрентген</text><text x="1849" y="1731">Развилка</text><text x="1656" y="1990">Видное</text><text class="end" x="206" y="1645">Московский</text>
        <text class="start heavy" x="2373" y="1064">Люберцы</text><text class="start" x="2412" y="1818">Лыткарино</text>
      </g>
      <g>
        <use href="#train" x="1113" y="150" width="36" height="36"/><use href="#train" x="1083" y="285" width="36" height="36"/><use href="#train" x="1023" y="543" width="36" height="36"/>
        <use href="#train" x="1305" y="162" width="36" height="36"/><use href="#train" x="1404" y="288" width="36" height="36"/><use href="#train" x="1431" y="438" width="36" height="36"/>
        <use href="#train" x="1341" y="648" width="36" height="36"/><use href="#train" x="1806" y="81" width="36" height="36"/>
        <rect x="1971" y="1484" width="75" height="37" rx="6" fill="#3b9a5b"/><text class="badge" x="2008" y="1513">E115</text>
        <rect x="1567" y="1870" width="35" height="35" rx="6" fill="#f1683b"/><text class="badge" x="1584" y="1898">₽</text>
      </g>
      <g>
        <rect x="1124" y="1738" width="460" height="68" rx="16" fill="#fff" opacity=".92"/>
        <text class="pin-label" x="1144" y="1786">Куликовская улица, 1</text>
        <circle cx="1035" cy="1777" r="76" fill="#999" opacity=".18"/>
        <path fill="#ee2024" d="M1035 1704A69 69 0 0 1 1059 1838Q1040 1846 1035 1860Q1030 1846 1011 1838A69 69 0 0 1 1035 1704Z"/>
        <path fill="#fff" fill-rule="evenodd" d="M1005 1745L1013 1738H1041V1760L1065 1755V1805H1037V1790H1028V1805H1005ZM1014 1750V1763H1021V1750ZM1027 1750V1763H1034V1750ZM1014 1770V1782H1021V1770ZM1027 1770V1782H1034V1770ZM1047 1767V1771H1059V1767ZM1047 1778V1782H1059V1778ZM1047 1789V1793H1059V1789Z"/>
        <circle cx="1035" cy="1881" r="9" fill="#fff"/><circle cx="1035" cy="1881" r="6" fill="#ee2024"/>
      </g>
    </svg>
  </div>
</main>

<footer class="footer">
  <div class="wrap">
    <div class="footer-main">
      <a class="logo logo-small" href="#">
        <svg class="logo-mark" aria-hidden="true"><use href="#mark"/></svg>
        <span>ЛУГА<br>И БЕРЕГА</span>
      </a>
      <nav class="footer-nav" aria-label="Для клиентов">
        <h3>ДЛЯ КЛИЕНТОВ</h3>
        <a href="#">Каталог товаров</a><a href="#">Доставка и оплата</a><a href="#">Обмен и возврат</a><a href="#">Рецепты</a>
      </nav>
      <nav class="footer-nav" aria-label="Компания">
        <h3>КОМПАНИЯ</h3>
        <a href="#">О нас</a><a href="#">Контакты</a>
      </nav>
      <div class="contacts">
        <a class="phone" href="tel:+74957972216">+7 (495) 797-22-16</a>
        <span>Ежедневно с 10 до 20</span>
        <a href="mailto:hello@lugaberega.ru">hello@lugaberega.ru</a>
        <div class="socials">
          <a href="#" aria-label="Telegram"><svg width="20" height="20"><use href="#telegram"/></svg></a>
          <a href="#" aria-label="WhatsApp"><svg width="20" height="20"><use href="#whatsapp"/></svg></a>
          <a href="#" aria-label="Instagram"><svg width="20" height="20"><use href="#instagram"/></svg></a>
          <a href="#" aria-label="ВКонтакте"><svg width="23" height="14"><use href="#vk"/></svg></a>
        </div>
      </div>
      <div class="payments">
        <svg viewBox="0 0 62 50" width="62" height="50"><circle cx="19" cy="19" r="19" fill="#ee2024"/><circle cx="42.500" cy="19" r="19" fill="#f79b58"/><path fill="#f26a47" d="M30.750 4.100A19 19 0 0 1 30.750 33.900A19 19 0 0 1 30.750 4.100Z"/><text class="card-name" x="31" y="47">mastercard</text></svg>
        <svg viewBox="0 0 62 50" width="62" height="50"><circle cx="19" cy="19" r="19" fill="#ee2024"/><circle cx="42.500" cy="19" r="19" fill="#3aa3d4"/><path fill="#5a62b5" d="M30.750 4.100A19 19 0 0 1 30.750 33.900A19 19 0 0 1 30.750 4.100Z"/><text class="card-name" x="31" y="47">maestro</text></svg>
        <svg viewBox="0 0 62 20" width="62" height="20"><path fill="#1a1a1a" d="M0 0H7L9 5Q5 1.500 0 1Z"/><text class="visa" x="3" y="19">VISA</text></svg>
        <svg viewBox="0 0 62 20" width="62" height="20"><text class="mir" x="-1" y="19">МИ</text><path fill="#42bf6f" d="M45 8Q47 11 52 11H61Q59 15 54 15H51V19H45Z"/><path fill="#36a6cf" d="M44 2H56Q62 3 61 10H52Q45 9 44 2Z"/></svg>
        <svg viewBox="0 0 62 40" width="62" height="40"><rect class="pay-frame" x=".5" y="1.500" width="60" height="37" rx="3"/><path fill="#1a1a1a" d="M16 14C17 14 18 13.200 19.200 13.200C20.500 13.200 21.500 13.800 22 14.700C19.500 16.200 19.800 20 22.500 21C21.700 23.200 20.500 25 19.200 25C18 25 17.600 24.300 16.200 24.300C14.800 24.300 14.300 25 13.200 25C11.500 25 9 21.700 9 18.500C9 15 11.200 13.200 13.200 13.200C14.500 13.200 15.300 14 16 14ZM18.800 9.800C19 11.500 17.700 13.200 15.900 13.200C15.700 11.500 17.200 9.900 18.800 9.800Z"/><text class="pay-name thin" x="24" y="25">Pay</text></svg>
        <svg viewBox="0 0 62 40" width="62" height="40"><rect class="pay-frame" x=".5" y="1.500" width="60" height="37" rx="3"/><path fill="none" stroke="#1a1a1a" stroke-width="2.600" d="M19.800 13.800A6 6 0 1 0 21.300 18.400H15.300"/><text class="pay-name" x="25" y="25">Pay</text></svg>
      </div>
    </div>
    <div class="legal">
      <span>© 2021. Луга и берега</span>
      <a href="#">Карта сайта</a>
      <a href="#">Оферта</a>
      <a href="#">Политика конфиденциальности</a>
      <a class="author" href="#">Разработка сайта — <b>Advance Media</b>
        <svg viewBox="0 0 32 26" width="32" height="26" aria-hidden="true"><g fill="#42bf6f"><path d="M0 10L6 7L3 17L0 20ZM8 6H12L17 20H14L13 17H7L6 20H4ZM10 10L8 15H12ZM5 20H13.500V23L9.500 26L5 23ZM13 7L17 10V20Z"/><path d="M19 0L23 2.200V6.800L19 9L15 6.800V2.200ZM26 6.500L32 9.800V17L26 20L20 17V9.800Z"/></g><path fill="#fff" d="M19 3L20.300 5L19 6.500L17.700 5ZM24.500 11L26 14L28 11V13L26 16L24.500 14Z"/></svg>
      </a>
    </div>
  </div>
</footer>
</body>
</html>
```
FILE: styles.css
```css
:root {
  --ink: #1a1a1a;
  --orange: #f26a3d;
  --blue: #36a6cf;
  --green: #42bf6f;
  --sand: #f6f4ee;
  --muted: #bfbfbf;
  --display: "Roboto Condensed", "Liberation Sans Narrow", Roboto, sans-serif;
}

* { box-sizing: border-box; }

body {
  margin: 0;
  background: #fff;
  color: var(--ink);
  font: 18px/26px Lato, "Open Sans", sans-serif;
}

a { color: inherit; text-decoration: none; white-space: nowrap; }
svg { display: block; flex: none; }
h1, h2, h3, ul { margin: 0; padding: 0; }
ul { list-style: none; }
button { border: 0; padding: 0; background: none; cursor: pointer; }
b { font-weight: inherit; }

.sprite { position: absolute; width: 0; height: 0; }
.wrap { padding: 0 130px; }

/* Header */
.header {
  display: grid;
  grid-template-columns: 530px 1fr;
  padding: 20px 0;
  border-bottom: 3px solid #141417;
}

.logo {
  display: flex;
  align-items: center;
  align-self: center;
  gap: 24px;
  font: bold 36px/33px var(--display);
}
.logo-mark { width: 94px; height: 94px; }

.header-main { display: grid; gap: 20px; }
.header-top {
  display: grid;
  grid-template-columns: 217px 185px 216px 1fr 260px;
  align-items: center;
  white-space: nowrap;
}
.header-top .info { padding-top: 4px; }

.callback {
  display: flex;
  align-items: center;
  gap: 6px;
  color: var(--orange);
  font: bold 18px/20px var(--display);
}

.socials { display: flex; gap: 10px; }
.socials a {
  display: grid;
  place-items: center;
  width: 40px;
  height: 40px;
  border-radius: 50%;
  background: var(--sand);
}

.search {
  display: flex;
  align-items: center;
  height: 40px;
  padding: 0 14px 0 18px;
  border: 2px solid #efeeea;
  border-radius: 20px;
}
.search input {
  flex: 1;
  min-width: 0;
  padding: 0;
  border: 0;
  outline: 0;
  background: none;
  font: 14px/20px Lato, sans-serif;
}
.search input::placeholder { color: #9a9a9a; }

.header-bottom { display: flex; align-items: center; gap: 83px; }
.nav {
  flex: 1;
  display: flex;
  justify-content: space-between;
  padding-top: 12px;
  font: bold 20px/24px var(--display);
}
.nav a { display: flex; align-items: center; gap: 6px; }
.nav .active { color: var(--orange); }

.cart {
  display: flex;
  align-items: center;
  justify-content: center;
  gap: 8px;
  width: 160px;
  height: 50px;
  border-radius: 25px;
  background: var(--sand);
  font-size: 16px;
}
.cart svg { margin-bottom: 5px; }
.cart b { color: var(--blue); }

/* Page */
.crumbs {
  padding-top: 8px;
  color: var(--muted);
  font-size: 14px;
  line-height: 20px;
}
.crumbs span { margin-left: 4px; color: var(--orange); }

h1 {
  margin-top: 46px;
  font: bold 38px/48px var(--display);
}

.content {
  display: grid;
  grid-template-columns: 1fr 1fr;
  gap: 20px;
  margin-top: 55px;
}
.cards { display: grid; gap: 10px; }
.card {
  padding: 52px 45px 50px;
  border: 2px solid #f7f6f1;
}
.card:last-child { padding-bottom: 62px; }
.card h2 {
  color: var(--blue);
  font: bold 24px/32px var(--display);
}
.pay-list, .ship-list { display: grid; gap: 10px; margin-top: 18px; }
.pay-list { padding-bottom: 10px; }
.pay-list li { display: flex; align-items: center; gap: 17px; height: 26px; white-space: nowrap; }
.ship-list li { display: flex; gap: 15px; }
.ship-list svg { margin-top: 8px; }

/* Map */
.map { width: 100%; height: 100%; min-height: 690px; font-family: "Noto Sans", sans-serif; }
.rural { fill: #fffefa; }
.suburb { fill: #f6f4ef; }
.grove, .pale { fill: #e6f3da; }
.park { fill: #d7f0c4; }
.lake { fill: #b4def2; }
.river, .road, .avenue, .motorway, .rail, .border { fill: none; stroke-linejoin: round; }
.river { stroke: #b4def2; }
.road { stroke: #ffdc9b; stroke-width: 8; }
.avenue { stroke: #ffc97f; stroke-width: 13; }
.motorway { stroke: #f9a25c; stroke-width: 12; }
.rail { stroke: #b1b2b8; stroke-width: 3; stroke-dasharray: 14 2; }
.border { stroke: #c5c5d2; stroke-width: 4; stroke-dasharray: 14 5; }
.map text { text-anchor: middle; paint-order: stroke; stroke: #fff; stroke-width: 4; stroke-linejoin: round; }
.district { fill: #b4b5c0; font-size: 28px; font-weight: 600; }
.street { fill: #3f4046; font-size: 30px; }
.street .stream { fill: #3d84c4; }
.town { fill: #3f4046; font-size: 34px; }
.city { fill: #3f4046; font-size: 44px; }
.map .strong { font-weight: 500; }
.map .heavy { font-weight: 700; }
.map .capital { font-size: 52px; font-weight: 700; }
.map .end { text-anchor: end; }
.map .start { text-anchor: start; }
.map .badge { fill: #fff; stroke: none; font-size: 27px; font-weight: 600; }
.map .pin-label { text-anchor: start; fill: #1a1a1a; font-size: 40px; }

/* Footer */
.footer { margin-top: 100px; border-top: 3px solid #141417; }
.footer-main {
  display: grid;
  grid-template-columns: 522px 210px 237px 383px 1fr;
  align-items: start;
  min-height: 447px;
  padding-top: 139px;
  font-size: 16px;
}
.logo-small { align-self: start; gap: 18px; margin-top: 4px; font-size: 28px; line-height: 26px; }
.logo-small .logo-mark { width: 74px; height: 74px; }

.footer-nav { display: grid; line-height: 33px; }
.footer-nav h3 {
  margin-bottom: 24px;
  color: var(--blue);
  font: bold 17px/24px var(--display);
}

.contacts { display: grid; line-height: 35px; }
.contacts .phone { margin-bottom: 3px; font-size: 24px; line-height: 42px; }
.contacts .socials { margin-top: 13px; }

.payments {
  display: grid;
  grid-template-columns: 62px 62px;
  grid-template-rows: 53px 20px 40px;
  gap: 15px 47px;
}
.card-name { font: 600 10px Inter, sans-serif; text-anchor: middle; fill: var(--ink); }
.visa { font: italic 800 26px "Open Sans", sans-serif; fill: var(--ink); }
.mir { font: 900 24px Inter, sans-serif; fill: var(--green); }
.pay-frame { fill: none; stroke: #3a3a3a; stroke-width: 1; }
.pay-name { font: 500 18px "Open Sans", sans-serif; fill: var(--ink); }
.pay-name.thin { font-weight: 300; }

.legal {
  display: grid;
  grid-template-columns: 594px 139px 111px 1fr auto;
  align-items: center;
  padding: 28px 0 23px;
  border-top: 2px solid #141417;
  color: var(--muted);
  font-size: 14px;
}
.author { display: flex; align-items: center; gap: 4px; }
.author b { color: var(--green); }
.author svg { margin-left: 5px; }
```
